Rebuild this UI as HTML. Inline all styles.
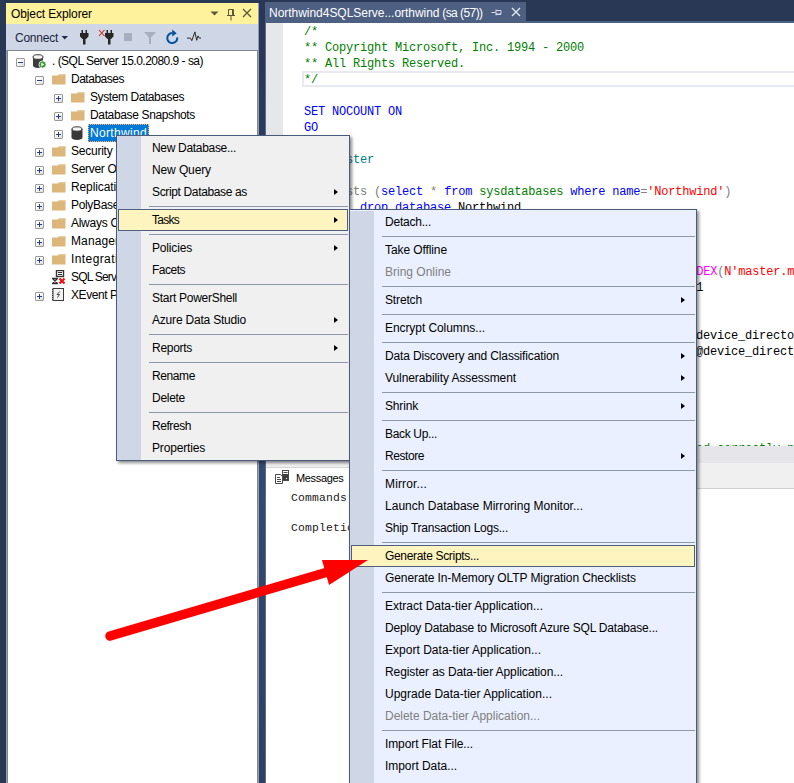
<!DOCTYPE html>
<html lang="en"><head><meta charset="utf-8"><title>Object Explorer - Generate Scripts</title>
<style>
html,body{margin:0;padding:0}
body{width:794px;height:783px;background:#293955;overflow:hidden;position:relative;font:12px/1 'Liberation Sans',sans-serif;color:#000}
.abs{position:absolute}
.abs,.abs *{box-sizing:border-box}
span{white-space:pre}
.t{position:absolute;white-space:pre;line-height:16px;height:16px}
.code{position:absolute;left:304px;font:12px/16px 'Liberation Mono',monospace;letter-spacing:-.2px;white-space:pre;height:16px;color:#000}
.k{color:#0000ff}.c{color:#008000}.s{color:#ff0000}.g{color:#808080}.f{color:#ff00ff}.sy{color:#008000}
.menu{position:absolute;box-sizing:border-box;border:1px solid #4a5c7e;box-shadow:2px 2px 3px rgba(0,0,0,.45)}
.mi{position:absolute;left:0;height:22px;line-height:22px;white-space:pre}
.sep{position:absolute;height:1px;background:#8e99ad}
.arr{position:absolute;width:0;height:0;border-left:4.5px solid #000;border-top:3.75px solid transparent;border-bottom:3.75px solid transparent}
.hl{position:absolute;box-sizing:border-box;background:#fdf4bf;border:1px solid #4d6082}
.row{position:absolute;height:18px;line-height:18px;white-space:pre}
.box{position:absolute;box-sizing:border-box;width:9px;height:9px;border:1px solid #9a9a9a;background:linear-gradient(135deg,#fff 30%,#dcdbd6);border-radius:1px}
.box:before{content:"";position:absolute;left:1px;top:3px;width:5px;height:1px;background:#2a3c8c}
.box.p:after{content:"";position:absolute;left:3px;top:1px;width:1px;height:5px;background:#2a3c8c}
</style></head><body>

<div class="abs" style="left:6px;top:3px;width:253px;height:780px;background:#8e9bbc"></div>
<div class="abs" style="left:6px;top:3px;width:252px;height:21px;background:#fff29d"></div>
<div class="t" style="left:11px;top:6px;color:#000"><span style="letter-spacing:-0.114px">Object Explorer</span></div>
<svg class="abs" style="left:206px;top:3px" width="53" height="21" viewBox="0 0 53 21">
<path d="M4.5 8.5h8l-4 4z" fill="#5c5738"/>
<path d="M22.5 6.5h5v6h-5z M21 12.5h8 M25 12.5v5 M26.5 6.5v6" fill="none" stroke="#5c5738" stroke-width="1"/>
<path d="M37 6l8 8M45 6l-8 8" fill="none" stroke="#5c5738" stroke-width="1.3"/>
</svg>
<div class="abs" style="left:6px;top:24px;width:252px;height:26px;background:#cfd6e5"></div>
<div class="t" style="left:15px;top:30px;color:#1a2540"><span style="letter-spacing:-0.243px">Connect</span></div>
<svg class="abs" style="left:58px;top:24px" width="150" height="26" viewBox="0 0 150 26">
<path d="M3.500 12h6.500l-3.250 3.500z" fill="#1e2a4a"/>
<g fill="#262626">
<path d="M23.500 6h1.500v3h-1.500zM27.500 6h1.500v3h-1.500zM22 9h8.500v3.500l-2.500 2.500h-.5v5.500h-2.500v-5.500h-.5l-2.500-2.500z"/>
<path d="M48.500 6h1.500v3h-1.500zM52.500 6h1.500v3h-1.500zM47 9h8.500v3.500l-2.500 2.500h-.5v5.500h-2.500v-5.500h-.5l-2.500-2.500z"/>
</g>
<path d="M41 6l5.500 6M46.500 6l-5.500 6" stroke="#c8301e" stroke-width="1.100" fill="none"/>
<rect x="66" y="9" width="8" height="8" fill="#a7aebd"/>
<path d="M86 8h12l-5 5.500v6.500h-2v-6.500z" fill="#a7aebd"/>
<path d="M119.200 13.300A5 5 0 1 1 114.200 9.100" fill="none" stroke="#00539c" stroke-width="2"/>
<path d="M114.200 5.500L118.700 9.200L114.200 12.600z" fill="#00539c"/>
<path d="M129 14.100h3.500l1.300 2.600 3.100-8.800 1.800 8.400 1.300-4.400 1.300 2.200h1.700" fill="none" stroke="#2a2a2a" stroke-width="1" stroke-linejoin="round"/>
</svg>
<div class="abs" style="left:259px;top:24px;width:6px;height:759px;background:linear-gradient(#2a3856 0,#2a3856 40px,#364a6e 440px,#2f4060 759px)"></div>
<div class="abs" style="left:7px;top:50px;width:251px;height:740px;background:#fff;border:1px solid #828790"></div>
<div class="box" style="left:16px;top:58px"></div>
<svg class="abs" style="left:32px;top:54px" width="15" height="15" viewBox="0 0 15 15">
<path d="M1 3v8.500c0 1.400 2.200 2.500 5 2.500s5-1.100 5-2.500v-8.500z" fill="#3c3c3c"/>
<ellipse cx="6" cy="3" rx="5" ry="2.300" fill="#f4f4f4" stroke="#3c3c3c" stroke-width="1"/>
<circle cx="10.500" cy="10.500" r="3.600" fill="#339933" stroke="#fff" stroke-width=".8"/>
<path d="M9.300 8.600l3 1.900-3 1.900z" fill="#fff"/></svg>
<div class="row" style="left:52px;top:52px"><span style="letter-spacing:-0.515px">. (SQL Server 15.0.2080.9 - sa)</span></div>
<div class="box" style="left:35px;top:76px"></div>
<svg class="abs" style="left:52px;top:74px" width="14" height="11" viewBox="0 0 14 11"><path d="M0 1.500h1.500l0 0h4.500l1-1.500h6.500v10.500h-13.500z" fill="#dcb67a"/><path d="M7 0h6.500v1.200h-7.300z" fill="#e8cfa2"/></svg>
<div class="row" style="left:71px;top:70px"><span style="letter-spacing:-0.486px">Databases</span></div>
<div class="box p" style="left:54px;top:94px"></div>
<svg class="abs" style="left:71px;top:92px" width="14" height="11" viewBox="0 0 14 11"><path d="M0 1.500h1.500l0 0h4.500l1-1.500h6.500v10.500h-13.500z" fill="#dcb67a"/><path d="M7 0h6.500v1.200h-7.300z" fill="#e8cfa2"/></svg>
<div class="row" style="left:90px;top:88px"><span style="letter-spacing:-0.420px">System Databases</span></div>
<div class="box p" style="left:54px;top:112px"></div>
<svg class="abs" style="left:71px;top:110px" width="14" height="11" viewBox="0 0 14 11"><path d="M0 1.500h1.500l0 0h4.500l1-1.500h6.500v10.500h-13.500z" fill="#dcb67a"/><path d="M7 0h6.500v1.200h-7.300z" fill="#e8cfa2"/></svg>
<div class="row" style="left:90px;top:106px"><span style="letter-spacing:-0.357px">Database Snapshots</span></div>
<div class="box p" style="left:54px;top:130px"></div>
<svg class="abs" style="left:71px;top:126px" width="13" height="15" viewBox="0 0 13 15">
<path d="M.5 3v8.500c0 1.400 2.500 2.400 5.500 2.400s5.500-1 5.500-2.400v-8.500z" fill="#383838"/>
<ellipse cx="6" cy="3" rx="5" ry="2.200" fill="#f4f4f4" stroke="#383838" stroke-width="1"/></svg>
<div class="abs" style="left:88px;top:124px;width:61px;height:18px;background:#0078d7;border:1px dotted #ffb468"></div>
<div class="row" style="left:90px;top:124px;color:#fff"><span style="letter-spacing:0.330px">Northwind</span></div>
<div class="box p" style="left:35px;top:148px"></div>
<svg class="abs" style="left:52px;top:146px" width="14" height="11" viewBox="0 0 14 11"><path d="M0 1.500h1.500l0 0h4.500l1-1.500h6.500v10.500h-13.500z" fill="#dcb67a"/><path d="M7 0h6.500v1.200h-7.300z" fill="#e8cfa2"/></svg>
<div class="row" style="left:71px;top:142px"><span style="letter-spacing:-0.232px">Security</span></div>
<div class="box p" style="left:35px;top:166px"></div>
<svg class="abs" style="left:52px;top:164px" width="14" height="11" viewBox="0 0 14 11"><path d="M0 1.500h1.500l0 0h4.500l1-1.500h6.500v10.500h-13.500z" fill="#dcb67a"/><path d="M7 0h6.500v1.200h-7.300z" fill="#e8cfa2"/></svg>
<div class="row" style="left:71px;top:160px"><span style="letter-spacing:-0.314px">Server Objects</span></div>
<div class="box p" style="left:35px;top:184px"></div>
<svg class="abs" style="left:52px;top:182px" width="14" height="11" viewBox="0 0 14 11"><path d="M0 1.500h1.500l0 0h4.500l1-1.500h6.500v10.500h-13.500z" fill="#dcb67a"/><path d="M7 0h6.500v1.200h-7.300z" fill="#e8cfa2"/></svg>
<div class="row" style="left:71px;top:178px"><span style="letter-spacing:-0.115px">Replication</span></div>
<div class="box p" style="left:35px;top:202px"></div>
<svg class="abs" style="left:52px;top:200px" width="14" height="11" viewBox="0 0 14 11"><path d="M0 1.500h1.500l0 0h4.500l1-1.500h6.500v10.500h-13.500z" fill="#dcb67a"/><path d="M7 0h6.500v1.200h-7.300z" fill="#e8cfa2"/></svg>
<div class="row" style="left:71px;top:196px"><span style="letter-spacing:-0.338px">PolyBase</span></div>
<div class="box p" style="left:35px;top:220px"></div>
<svg class="abs" style="left:52px;top:218px" width="14" height="11" viewBox="0 0 14 11"><path d="M0 1.500h1.500l0 0h4.500l1-1.500h6.500v10.500h-13.500z" fill="#dcb67a"/><path d="M7 0h6.500v1.200h-7.300z" fill="#e8cfa2"/></svg>
<div class="row" style="left:71px;top:214px"><span style="letter-spacing:-0.273px">Always On High Availability</span></div>
<div class="box p" style="left:35px;top:238px"></div>
<svg class="abs" style="left:52px;top:236px" width="14" height="11" viewBox="0 0 14 11"><path d="M0 1.500h1.500l0 0h4.500l1-1.500h6.500v10.500h-13.500z" fill="#dcb67a"/><path d="M7 0h6.500v1.200h-7.300z" fill="#e8cfa2"/></svg>
<div class="row" style="left:71px;top:232px"><span style="letter-spacing:0.104px">Management</span></div>
<div class="box p" style="left:35px;top:256px"></div>
<svg class="abs" style="left:52px;top:254px" width="14" height="11" viewBox="0 0 14 11"><path d="M0 1.500h1.500l0 0h4.500l1-1.500h6.500v10.500h-13.500z" fill="#dcb67a"/><path d="M7 0h6.500v1.200h-7.300z" fill="#e8cfa2"/></svg>
<div class="row" style="left:71px;top:250px"><span style="letter-spacing:0.405px">Integration Services Catalogs</span></div>
<svg class="abs" style="left:52px;top:270px" width="15" height="15" viewBox="0 0 15 15">
<rect x="4.500" y=".5" width="7" height="6" fill="#fff" stroke="#333" stroke-width="1.400"/><path d="M6 2.500h4M6 4.500h4" stroke="#333"/>
<path d="M0 8.500h6M0 13.500h6M1 9l4 4M5 9l-4 4" stroke="#333" stroke-width="1.300" fill="none"/>
<path d="M7.500 8.500l5 5M12.500 8.500l-5 5" stroke="#ee1111" stroke-width="2.200" fill="none"/></svg>
<div class="row" style="left:71px;top:268px"><span style="letter-spacing:-0.797px">SQL Server Agent (XPs disabled)</span></div>
<div class="box p" style="left:35px;top:292px"></div>
<svg class="abs" style="left:52px;top:288px" width="13" height="15" viewBox="0 0 13 15">
<rect x="1" y=".5" width="10.500" height="12" fill="#f2f2f2" stroke="#3a3a3a"/>
<path d="M.5 1v11.500" stroke="#3a3a3a" stroke-width="1" stroke-dasharray="1 1" fill="none"/>
<path d="M7.800 3.500l-2.800 3h2.500l-2 3" fill="none" stroke="#333" stroke-width=".9"/></svg>
<div class="row" style="left:71px;top:286px"><span style="letter-spacing:-0.441px">XEvent Profiler</span></div>
<div class="abs" style="left:265px;top:2px;width:261px;height:19px;background:#4d6082"></div>
<div class="abs" style="left:265px;top:21px;width:529px;height:2px;background:#4d6082"></div>
<div class="t" style="left:269px;top:5px;color:#fff"><span style="letter-spacing:-0.032px">Northwind4SQLServe...orthwind</span><span style="letter-spacing:-0.569px"> (sa (57))</span></div>
<svg class="abs" style="left:488px;top:2px" width="38" height="19" viewBox="0 0 36 19">
<path d="M3 10.500h4M7.500 7.500v6M7.500 8.500h5v3.500h-5M7.500 12.500h5" fill="none" stroke="#d6dbe9" stroke-width="1" transform="translate(-.5 0)"/>
<path d="M23 6l8 8M31 6l-8 8" fill="none" stroke="#e6e9f2" stroke-width="1.300"/></svg>
<div class="abs" style="left:265px;top:23px;width:529px;height:424px;background:#fff"></div>
<div class="abs" style="left:265px;top:23px;width:18px;height:424px;background:#e6e7e8"></div>
<div class="abs" style="left:302px;top:71px;width:500px;height:16px;border:2px solid #e9e9f2"></div>
<div class="code" style="top:24px;left:304px"><span class="c">/*</span></div>
<div class="code" style="top:40px;left:304px"><span class="c">** Copyright Microsoft, Inc. 1994 - 2000</span></div>
<div class="code" style="top:56px;left:304px"><span class="c">** All Rights Reserved.</span></div>
<div class="code" style="top:72px;left:304px"><span class="c">*/</span></div>
<div class="code" style="top:104px;left:304px"><span class="k">SET NOCOUNT ON</span></div>
<div class="code" style="top:120px;left:304px"><span class="k">GO</span></div>
<div class="code" style="top:152px;left:304px"><span class="k">USE</span> <span style="color:#008080">master</span></div>
<div class="code" style="top:168px;left:304px"><span class="k">GO</span></div>
<div class="code" style="top:184px;left:304px"><span class="k">if</span> <span class="g">exists</span> <span class="g">(</span><span class="k">select</span> <span class="g">*</span> <span class="k">from</span> <span class="sy">sysdatabases</span> <span class="k">where</span> <span class="k">name</span><span class="g">=</span><span class="s">'Northwind'</span><span class="g">)</span></div>
<div class="code" style="top:200px;left:304px">        <span class="k">drop</span> <span class="k">database</span> Northwind</div>
<div class="code" style="top:216px;left:304px"><span class="k">go</span></div>
<div class="code" style="top:248px;left:304px"><span class="k">DECLARE</span> @device_directory <span class="k">NVARCHAR</span><span class="g">(</span>520<span class="g">)</span></div>
<div class="code" style="top:264px;left:304px"><span class="k">SELECT</span> @device_directory <span class="g">=</span> <span class="f">SUBSTRING</span><span class="g">(</span>filename<span class="g">,</span> 1<span class="g">,</span> <span class="f">CHARINDEX</span><span class="g">(</span><span class="s">N'master.mdf'</span><span class="g">,</span> <span class="f">LOWER</span><span class="g">(</span>filename<span class="g">))</span> <span class="g">-</span> 1<span class="g">)</span></div>
<div class="code" style="top:280px;left:304px"><span class="k">FROM</span> master<span class="g">.</span>dbo<span class="g">.</span><span class="sy">sysaltfiles</span> <span class="k">WHERE</span> dbid <span class="g">=</span> 1 <span class="g">AND</span> fileid <span class="g">=</span> 1</div>
<div class="code" style="top:312px;left:304px"><span class="k">EXECUTE</span> <span class="g">(</span><span class="s">N'CREATE DATABASE Northwind</span></div>
<div class="code" style="top:328px;left:304px"><span class="s">  ON PRIMARY (NAME = N''Northwind'', FILENAME = N'''</span> <span class="g">+</span> @device_directory <span class="g">+</span> <span class="s">N'northwnd.mdf'')</span></div>
<div class="code" style="top:344px;left:304px"><span class="s">  LOG ON (NAME = N''Northwind_log'',  FILENAME = N'''</span> <span class="g">+</span> @device_directory <span class="g">+</span> <span class="s">N'northwnd.ldf'')'</span><span class="g">)</span></div>
<div class="code" style="top:360px;left:304px"><span class="k">go</span></div>
<div class="code" style="top:441px;left:696px"><span class="c">ed correctly now</span></div>
<div class="abs" style="left:265px;top:446px;width:529px;height:17px;background:#e6e6ea"></div>
<div class="abs" style="left:265px;top:463px;width:529px;height:26px;background:#f0f0f0;border-bottom:1px solid #cfcfcf"></div>
<div class="abs" style="left:265px;top:489px;width:529px;height:294px;background:#fff"></div>
<div class="abs" style="left:266px;top:467px;width:90px;height:23px;background:#fff;border-top:1px solid #d4d4d4"></div>
<div class="abs" style="left:265px;top:23px;width:1px;height:760px;background:#5a6d95"></div>
<svg class="abs" style="left:275px;top:470px" width="15" height="15" viewBox="0 0 15 15">
<rect x="7.500" y=".5" width="6" height="10" fill="#fff" stroke="#4a4a4a"/><rect x="8" y="4" width="5" height="6" fill="#3e3e3e"/><path d="M8.500 2.500h4" stroke="#4a4a4a"/><rect x="11" y="8" width="1" height="1" fill="#fff"/>
<path d="M.5 4.500h5l2 2v7h-7z" fill="#fff" stroke="#4a4a4a"/><path d="M2 7.500h3M2 9.500h4M2 11.500h4" stroke="#4a4a4a" stroke-width="1"/></svg>
<div class="t" style="left:296px;top:470px;font-size:11px;letter-spacing:-.33px;color:#000">Messages</div>
<div class="t" style="left:291px;top:490px;font:11.4px/16px 'Liberation Mono',monospace;letter-spacing:.18px;color:#1a1a1a">Commands completed successfully.</div>
<div class="t" style="left:291px;top:520px;font:11.4px/16px 'Liberation Mono',monospace;letter-spacing:.18px;color:#1a1a1a">Completion time: 2020-06-18T10:21:45.4386214+02:00</div>
<div class="menu" style="left:116px;top:135px;width:234px;height:326px;background:#f0f0f0">
<div class="abs" style="left:0;top:0;width:24px;height:324px;background:#cfd6e5"></div>
<div class="mi" style="left:35px;top:1px"><span style="letter-spacing:-0.315px">New Database...</span></div>
<div class="mi" style="left:35px;top:23px"><span style="letter-spacing:-0.115px">New Query</span></div>
<div class="mi" style="left:35px;top:45px"><span style="letter-spacing:-0.355px">Script Database as</span></div>
<div class="arr" style="left:217px;top:52.75px"></div>
<div class="sep" style="left:32px;top:70px;width:199px;background:#8c97ab"></div>
<div class="hl" style="left:1px;top:73px;width:230px;height:22px"></div>
<div class="mi" style="left:35px;top:73px"><span style="letter-spacing:-0.738px">Tasks</span></div>
<div class="arr" style="left:217px;top:80.75px"></div>
<div class="sep" style="left:32px;top:98px;width:199px;background:#8c97ab"></div>
<div class="mi" style="left:35px;top:101px"><span style="letter-spacing:-0.170px">Policies</span></div>
<div class="arr" style="left:217px;top:108.75px"></div>
<div class="mi" style="left:35px;top:123px"><span style="letter-spacing:-0.503px">Facets</span></div>
<div class="sep" style="left:32px;top:148px;width:199px;background:#8c97ab"></div>
<div class="mi" style="left:35px;top:151px"><span style="letter-spacing:-0.273px">Start PowerShell</span></div>
<div class="mi" style="left:35px;top:173px"><span style="letter-spacing:-0.199px">Azure Data Studio</span></div>
<div class="arr" style="left:217px;top:180.75px"></div>
<div class="sep" style="left:32px;top:198px;width:199px;background:#8c97ab"></div>
<div class="mi" style="left:35px;top:201px"><span style="letter-spacing:-0.290px">Reports</span></div>
<div class="arr" style="left:217px;top:208.75px"></div>
<div class="sep" style="left:32px;top:226px;width:199px;background:#8c97ab"></div>
<div class="mi" style="left:35px;top:229px"><span style="letter-spacing:-0.393px">Rename</span></div>
<div class="mi" style="left:35px;top:251px"><span style="letter-spacing:-0.281px">Delete</span></div>
<div class="sep" style="left:32px;top:276px;width:199px;background:#8c97ab"></div>
<div class="mi" style="left:35px;top:279px"><span style="letter-spacing:-0.433px">Refresh</span></div>
<div class="mi" style="left:35px;top:301px"><span style="letter-spacing:-0.170px">Properties</span></div>
</div>
<div class="menu" style="left:349px;top:209px;width:348px;height:600px;background:#eaf0ff">
<div class="abs" style="left:0;top:1px;width:24px;height:598px;background:#cfd6e5"></div>
<div class="mi" style="left:35px;top:1px;color:#000"><span style="letter-spacing:-0.226px">Detach...</span></div>
<div class="sep" style="left:32px;top:26px;width:313px"></div>
<div class="mi" style="left:35px;top:29px;color:#000"><span style="letter-spacing:-0.096px">Take Offline</span></div>
<div class="mi" style="left:35px;top:51px;color:#808080"><span style="letter-spacing:-0.004px">Bring Online</span></div>
<div class="sep" style="left:32px;top:76px;width:313px"></div>
<div class="mi" style="left:35px;top:79px;color:#000"><span style="letter-spacing:-0.145px">Stretch</span></div>
<div class="arr" style="left:331px;top:86.75px"></div>
<div class="sep" style="left:32px;top:104px;width:313px"></div>
<div class="mi" style="left:35px;top:107px;color:#000"><span style="letter-spacing:-0.076px">Encrypt Columns...</span></div>
<div class="sep" style="left:32px;top:132px;width:313px"></div>
<div class="mi" style="left:35px;top:135px;color:#000"><span style="letter-spacing:-0.144px">Data Discovery and Classification</span></div>
<div class="arr" style="left:331px;top:142.75px"></div>
<div class="mi" style="left:35px;top:157px;color:#000"><span style="letter-spacing:-0.081px">Vulnerability Assessment</span></div>
<div class="arr" style="left:331px;top:164.75px"></div>
<div class="sep" style="left:32px;top:182px;width:313px"></div>
<div class="mi" style="left:35px;top:185px;color:#000"><span style="letter-spacing:-0.169px">Shrink</span></div>
<div class="arr" style="left:331px;top:192.75px"></div>
<div class="sep" style="left:32px;top:210px;width:313px"></div>
<div class="mi" style="left:35px;top:213px;color:#000"><span style="letter-spacing:-0.336px">Back Up...</span></div>
<div class="mi" style="left:35px;top:235px;color:#000"><span style="letter-spacing:-0.433px">Restore</span></div>
<div class="arr" style="left:331px;top:242.75px"></div>
<div class="sep" style="left:32px;top:260px;width:313px"></div>
<div class="mi" style="left:35px;top:263px;color:#000"><span style="letter-spacing:0.148px">Mirror...</span></div>
<div class="mi" style="left:35px;top:285px;color:#000"><span style="letter-spacing:0.016px">Launch Database Mirroring Monitor...</span></div>
<div class="mi" style="left:35px;top:307px;color:#000"><span style="letter-spacing:-0.240px">Ship Transaction Logs...</span></div>
<div class="sep" style="left:32px;top:332px;width:313px"></div>
<div class="hl" style="left:1px;top:335px;width:344px;height:22px"></div>
<div class="mi" style="left:35px;top:335px;color:#000"><span style="letter-spacing:-0.318px">Generate Scripts...</span></div>
<div class="mi" style="left:35px;top:357px;color:#000"><span style="letter-spacing:-0.091px">Generate In-Memory OLTP Migration Checklists</span></div>
<div class="sep" style="left:32px;top:382px;width:313px"></div>
<div class="mi" style="left:35px;top:385px;color:#000"><span style="letter-spacing:-0.002px">Extract Data-tier Application...</span></div>
<div class="mi" style="left:35px;top:407px;color:#000"><span style="letter-spacing:-0.201px">Deploy Database to Microsoft Azure SQL Database...</span></div>
<div class="mi" style="left:35px;top:429px;color:#000"><span style="letter-spacing:0.019px">Export Data-tier Application...</span></div>
<div class="mi" style="left:35px;top:451px;color:#000"><span style="letter-spacing:-0.095px">Register as Data-tier Application...</span></div>
<div class="mi" style="left:35px;top:473px;color:#000"><span style="letter-spacing:0.007px">Upgrade Data-tier Application...</span></div>
<div class="mi" style="left:35px;top:495px;color:#808080"><span style="letter-spacing:-0.014px">Delete Data-tier Application...</span></div>
<div class="sep" style="left:32px;top:520px;width:313px"></div>
<div class="mi" style="left:35px;top:523px;color:#000"><span style="letter-spacing:-0.107px">Import Flat File...</span></div>
<div class="mi" style="left:35px;top:545px;color:#000"><span style="letter-spacing:-0.050px">Import Data...</span></div>
<div class="mi" style="left:35px;top:567px;color:#000"><span style="letter-spacing:-0.170px">Export Data...</span></div>
</div>
<svg class="abs" style="left:0;top:0;z-index:10" width="794" height="783" viewBox="0 0 794 783">
<path d="M110 636L326 572.500" stroke="#ff0000" stroke-width="9.500" stroke-linecap="round" fill="none"/>
<path d="M368 560L322 560L329 585z" fill="#ff0000"/></svg>
</body></html>
